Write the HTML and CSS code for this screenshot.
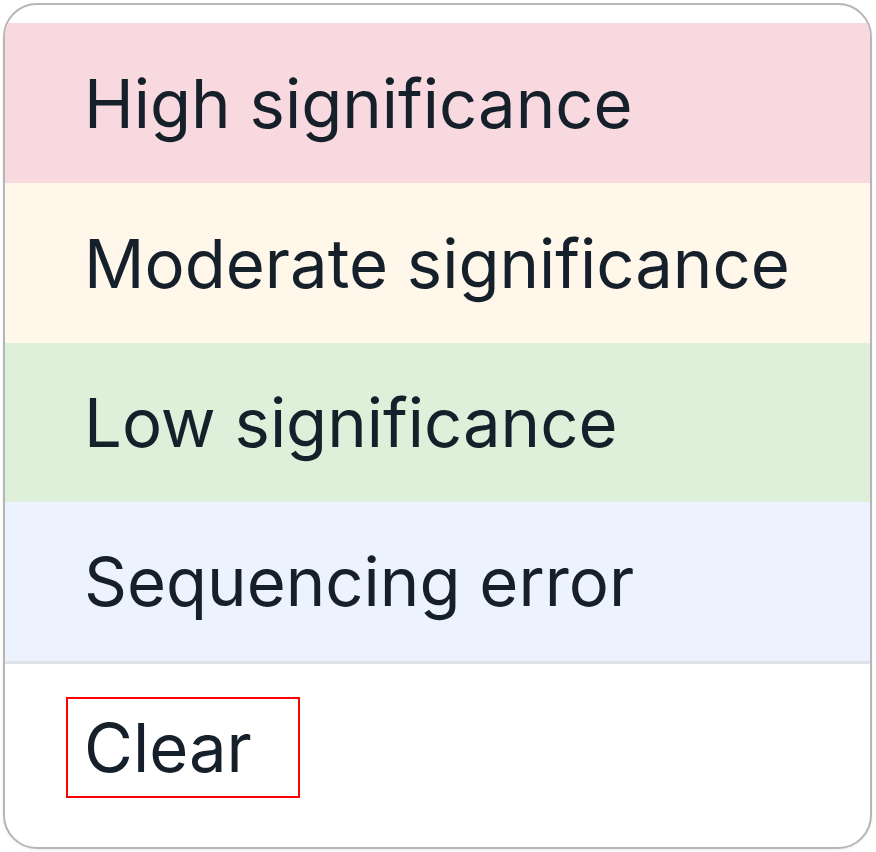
FILE: index.html
```html
<!DOCTYPE html>
<html lang="en">
<head>
<meta charset="utf-8">
<title>Significance menu</title>
<link rel="stylesheet" href="styles.css">
</head>
<body>
<div class="backdrop">
  <div class="menu" role="menu">
    <div class="options">
      <div class="option high" role="menuitem">High significance</div>
      <div class="option moderate" role="menuitem">Moderate significance</div>
      <div class="option low" role="menuitem">Low significance</div>
      <div class="option seq" role="menuitem">Sequencing error</div>
    </div>
    <div class="footer">
      <button class="clear" type="button">Clear</button>
    </div>
  </div>
</div>
</body>
</html>
```

FILE: styles.css
```css
* { box-sizing: border-box; }
html, body { margin: 0; padding: 0; background: #ffffff; }
body {
  font-family: Inter, "Noto Sans", "Liberation Sans", sans-serif;
  color: #15202b;
  width: 876px;
  height: 852px;
  overflow: hidden;
}
.backdrop {
  width: 876px;
  height: 852px;
  padding: 3px 0 0 3px;
  background: #ffffff;
}
.menu {
  width: 869px;
  height: 846px;
  border: 2px solid #b6b6b6;
  border-radius: 34px;
  background: #ffffff;
  overflow: hidden;
  display: flex;
  flex-direction: column;
  padding-top: 18px;
  box-shadow: 0 1px 3px rgba(0, 0, 0, 0.08);
}
.options {
  display: flex;
  flex-direction: column;
  border-bottom: 3px solid #e0e2e9;
}
.option {
  display: flex;
  align-items: center;
  padding-left: 79px;
  font-size: 67px;
  line-height: 1;
  height: 160px;
}
.option.low, .option.seq { height: 159px; }
.high { background: #f8d9df; }
.moderate { background: #fef7ea; }
.low { background: #def0da; }
.seq { background: #edf3fe; }
.footer {
  flex: 1;
  padding: 33px 0 0 61px;
}
.clear {
  font-family: inherit;
  font-size: 67px;
  line-height: 1;
  color: #15202b;
  background: #ffffff;
  border: 0;
  outline: 2px solid #ff0000;
  outline-offset: 0;
  margin: 2px;
  width: 230px;
  height: 97px;
  padding: 0 0 0 16px;
  text-align: left;
  display: flex;
  align-items: center;
}
```
